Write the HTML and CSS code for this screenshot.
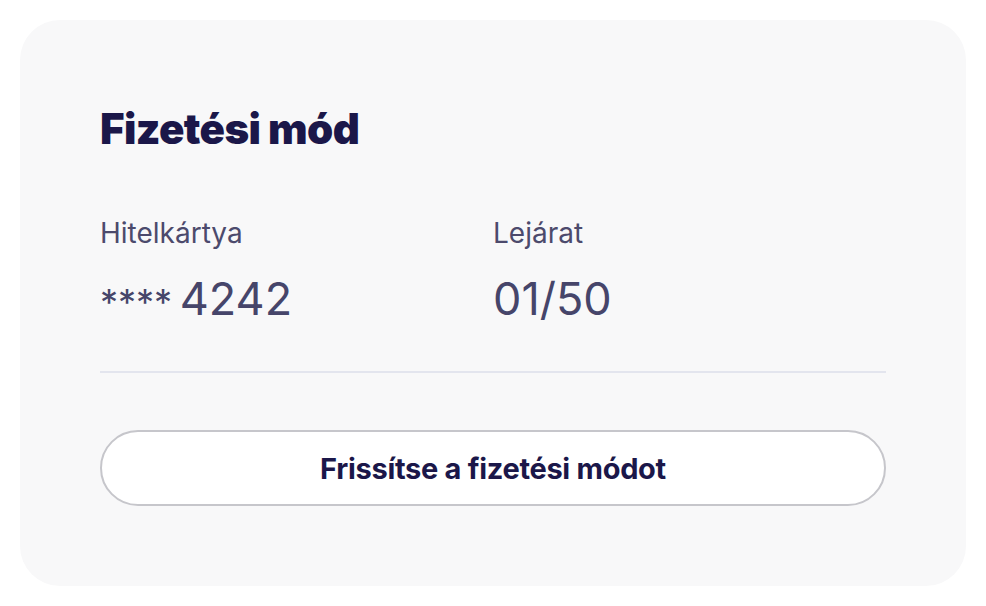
FILE: index.html
```html
<!DOCTYPE html>
<html lang="hu">
<head>
  <meta charset="UTF-8">
  <meta name="viewport" content="width=device-width, initial-scale=1">
  <title>Fizetési mód</title>
  <link rel="stylesheet" href="styles.css">
</head>
<body>
  <section class="card">
    <h2 class="card-title">Fizetési mód</h2>
    <div class="details">
      <div class="detail">
        <div class="label">Hitelkártya</div>
        <div class="value"><span class="stars">****</span> 4242</div>
      </div>
      <div class="detail">
        <div class="label">Lejárat</div>
        <div class="value">01/50</div>
      </div>
    </div>
    <hr class="divider">
    <button class="btn" type="button">Frissítse a fizetési módot</button>
  </section>
</body>
</html>
```

FILE: styles.css
```css
body { font-family: 'Inter', sans-serif; margin: 0; padding: 20px; background: #ffffff; }
.card { background: #f8f8f9; border-radius: 40px; padding: 83px 80px 80px; display: flex; flex-direction: column; }
.card-title { margin: 0; font-size: 42px; line-height: 52px; font-weight: 900; letter-spacing: -0.6px; color: #1b1749; }
.details { display: grid; grid-template-columns: 1fr 1fr; margin-top: 60px; }
.label { font-size: 28px; line-height: 36px; color: #4c4a6c; }
.value { margin-top: 22px; font-size: 45px; line-height: 52px; color: #46456a; word-spacing: -5px; }
.stars { font-size: 36px; }
.divider { margin: 43px 0 0; border: none; border-top: 2px solid #e3e5ee; }
.btn { margin-top: 57px; height: 76px; background: #ffffff; border: 2px solid #c6c6cb; border-radius: 38px; font-family: inherit; font-size: 29px; font-weight: 700; letter-spacing: -0.3px; color: #1b1749; cursor: pointer; }
```
